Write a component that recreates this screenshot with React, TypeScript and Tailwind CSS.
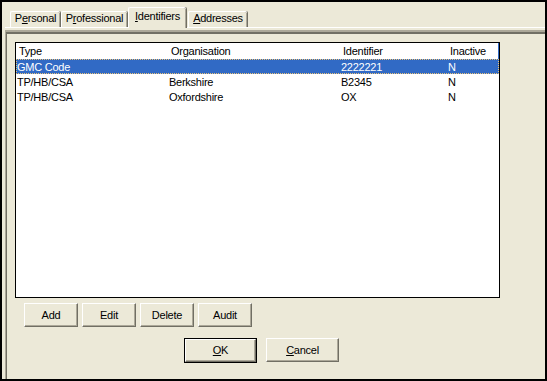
import React from 'react';

const rows = [
  { type: 'GMC Code', org: '', id: '2222221', inactive: 'N', selected: true },
  { type: 'TP/HB/CSA', org: 'Berkshire', id: 'B2345', inactive: 'N', selected: false },
  { type: 'TP/HB/CSA', org: 'Oxfordshire', id: 'OX', inactive: 'N', selected: false },
];

function Tab({ label, width, selected, ml }: { label: React.ReactNode; width: string; selected?: boolean; ml: string }) {
  if (selected) {
    return (
      <div
        className={`relative z-10 -mb-px flex h-[21px] ${width} ${ml} items-start justify-center rounded-t-[2px] border-l border-t border-white bg-[#ece9d8] pt-[3px] shadow-[inset_-1px_0_0_#aca899,1px_0_0_#716f64]`}
      >
        {label}
      </div>
    );
  }
  return (
    <div
      className={`flex h-[16px] ${width} ${ml} items-start justify-center rounded-t-[2px] border-l border-t border-white pt-[1px] shadow-[inset_-1px_0_0_#aca899,1px_0_0_#716f64]`}
    >
      {label}
    </div>
  );
}

function Btn({ children, width, isDefault }: { children: React.ReactNode; width: string; isDefault?: boolean }) {
  const inner = (
    <div className="flex h-full w-full items-center justify-center border-b border-l border-r border-t border-b-[#716f64] border-l-white border-r-[#716f64] border-t-white shadow-[inset_-1px_-1px_0_#aca899]">
      {children}
    </div>
  );
  if (isDefault) {
    return <div className={`h-[25px] ${width} border border-black`}>{inner}</div>;
  }
  return <div className={`h-[24px] ${width}`}>{inner}</div>;
}

export default function App() {
  return (
    <div
      className="h-[381px] w-[547px] overflow-hidden border-2 border-black bg-[#ece9d8] text-[11px] leading-none tracking-[-0.25px] text-black"
      style={{ fontFamily: '"Liberation Sans", Arial, sans-serif' }}
    >
      {/* tab strip */}
      <div className="flex h-[25px] items-end pl-[8px]">
        <Tab ml="ml-0" width="w-[50px]" label={<span>P<u>e</u>rsonal</span>} />
        <Tab ml="ml-[1px]" width="w-[66px]" label={<span>P<u>r</u>ofessional</span>} />
        <Tab ml="ml-px" width="w-[58px]" selected label={<span><u>I</u>dentifiers</span>} />
        <Tab ml="ml-[2px]" width="w-[59px]" label={<span><u>A</u>ddresses</span>} />
      </div>
      <div className="ml-[3px] border-t border-white" />

      {/* sunken page */}
      <div className="ml-[3px] mt-[2px] h-[360px] border-l border-t-2 border-l-[#aca899] border-t-[#aca899]">
        <div className="h-full border-l border-t-2 border-l-[#716f64] border-t-[#716f64] pt-[8px]">
          {/* list view */}
          <div className="ml-[8px] h-[256px] w-[485px] border border-black bg-white">
            <div className="relative grid h-[16px] grid-cols-[152px_172px_107px_1fr] items-center pl-[3px]">
              <span>Type</span>
              <span>Organisation</span>
              <span>Identifier</span>
              <span>Inactive</span>
              <div className="absolute right-0 top-0 h-full w-px bg-[#316ac5]" />
            </div>
            {rows.map((r, i) => (
              <div
                key={i}
                className={
                  r.selected
                    ? 'grid h-[15px] grid-cols-[152px_172px_107px_1fr] items-center border border-dotted border-[#e8c27a] bg-[#316ac5] pt-px text-white'
                    : 'grid h-[15px] grid-cols-[152px_172px_107px_1fr] items-center pl-[1px] pt-px'
                }
              >
                <span>{r.type}</span>
                <span>{r.org}</span>
                <span>{r.id}</span>
                <span>{r.inactive}</span>
              </div>
            ))}
          </div>

          {/* list buttons */}
          <div className="ml-[17px] mt-[5px] flex gap-[4px]">
            <Btn width="w-[54px]">Add</Btn>
            <Btn width="w-[54px]">Edit</Btn>
            <Btn width="w-[54px]">Delete</Btn>
            <Btn width="w-[54px]">Audit</Btn>
          </div>

          {/* dialog buttons */}
          <div className="ml-[177px] mt-[11px] flex gap-[9px]">
            <Btn width="w-[73px]" isDefault>
              <span><u>O</u>K</span>
            </Btn>
            <Btn width="w-[73px]">
              <span><u>C</u>ancel</span>
            </Btn>
          </div>
        </div>
      </div>
    </div>
  );
}
